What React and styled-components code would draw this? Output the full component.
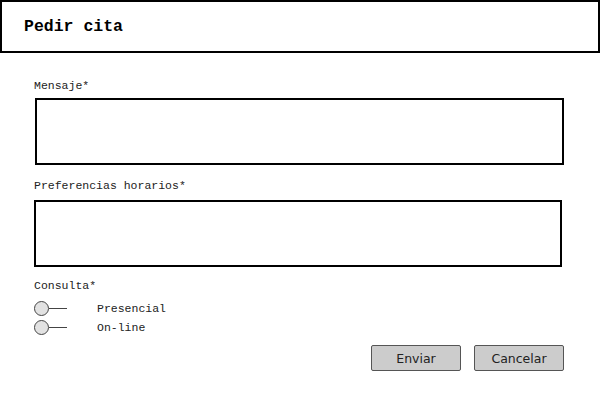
import React from 'react';
import styled, { createGlobalStyle } from 'styled-components';

const GlobalStyle = createGlobalStyle`
  body {
    margin: 0;
    background: #ffffff;
  }
  * {
    box-sizing: border-box;
  }
`;

function RadioOption(props) {
  return (
    <RadioRow>
      <RadioKnob>
        <RadioCircle />
        <RadioStem />
      </RadioKnob>
      <RadioLabel>{props.label}</RadioLabel>
    </RadioRow>
  );
}

export default function App() {
  return (
    <>
      <GlobalStyle />
      <Page>
        <Header>
          <Title>Pedir cita</Title>
        </Header>
        <FormBody>
          <Label top={26}>Mensaje*</Label>
          <TextBox left={1} width={529} top={5} />
          <Label top={14}>Preferencias horarios*</Label>
          <TextBox left={0} width={528} top={7} />
          <Label top={12}>Consulta*</Label>
          <RadioGroup>
            <RadioOption label="Presencial" />
            <RadioOption label="On-line" />
          </RadioGroup>
          <ButtonRow>
            <Button>Enviar</Button>
            <Button>Cancelar</Button>
          </ButtonRow>
        </FormBody>
      </Page>
    </>
  );
}

const Page = styled.div`
  width: 600px;
  height: 400px;
  display: flex;
  flex-direction: column;
`;

const Header = styled.header`
  height: 53px;
  width: 600px;
  border: 2px solid #000;
  display: flex;
  align-items: center;
  padding-left: 22px;
  padding-bottom: 1px;
`;

const Title = styled.h1`
  margin: 0;
  font-family: "Liberation Mono", "Courier New", monospace;
  font-size: 16.5px;
  font-weight: 700;
  color: #000;
`;

const FormBody = styled.div`
  display: flex;
  flex-direction: column;
  padding-left: 34px;
`;

const Label = styled.div`
  margin-top: ${p => p.top}px;
  font-family: "Liberation Mono", "Courier New", monospace;
  font-size: 11.5px;
  line-height: 14px;
  color: #222;
`;

const TextBox = styled.div`
  margin-top: ${p => p.top}px;
  margin-left: ${p => p.left}px;
  width: ${p => p.width}px;
  height: 67px;
  border: 2px solid #000;
  background: #fff;
`;

const RadioGroup = styled.div`
  display: flex;
  flex-direction: column;
  gap: 5px;
  margin-top: 8px;
`;

const RadioRow = styled.div`
  display: flex;
  align-items: center;
  height: 14px;
`;

const RadioKnob = styled.div`
  display: flex;
  align-items: center;
  width: 63px;
`;

const RadioCircle = styled.span`
  width: 15px;
  height: 15px;
  border-radius: 50%;
  border: 1px solid #444;
  background: #e2e2e2;
`;

const RadioStem = styled.span`
  width: 18px;
  height: 1px;
  background: #444;
`;

const RadioLabel = styled.span`
  font-family: "Liberation Mono", "Courier New", monospace;
  font-size: 11.5px;
  color: #222;
`;

const ButtonRow = styled.div`
  display: flex;
  justify-content: flex-end;
  gap: 13px;
  padding-right: 36px;
  margin-top: 11px;
`;

const Button = styled.button`
  width: 90px;
  height: 26px;
  padding: 0;
  border: 1px solid #555;
  border-radius: 2px;
  background: #cccccc;
  font-family: "DejaVu Sans", "Noto Sans", sans-serif;
  font-size: 12.5px;
  color: #222;
`;
